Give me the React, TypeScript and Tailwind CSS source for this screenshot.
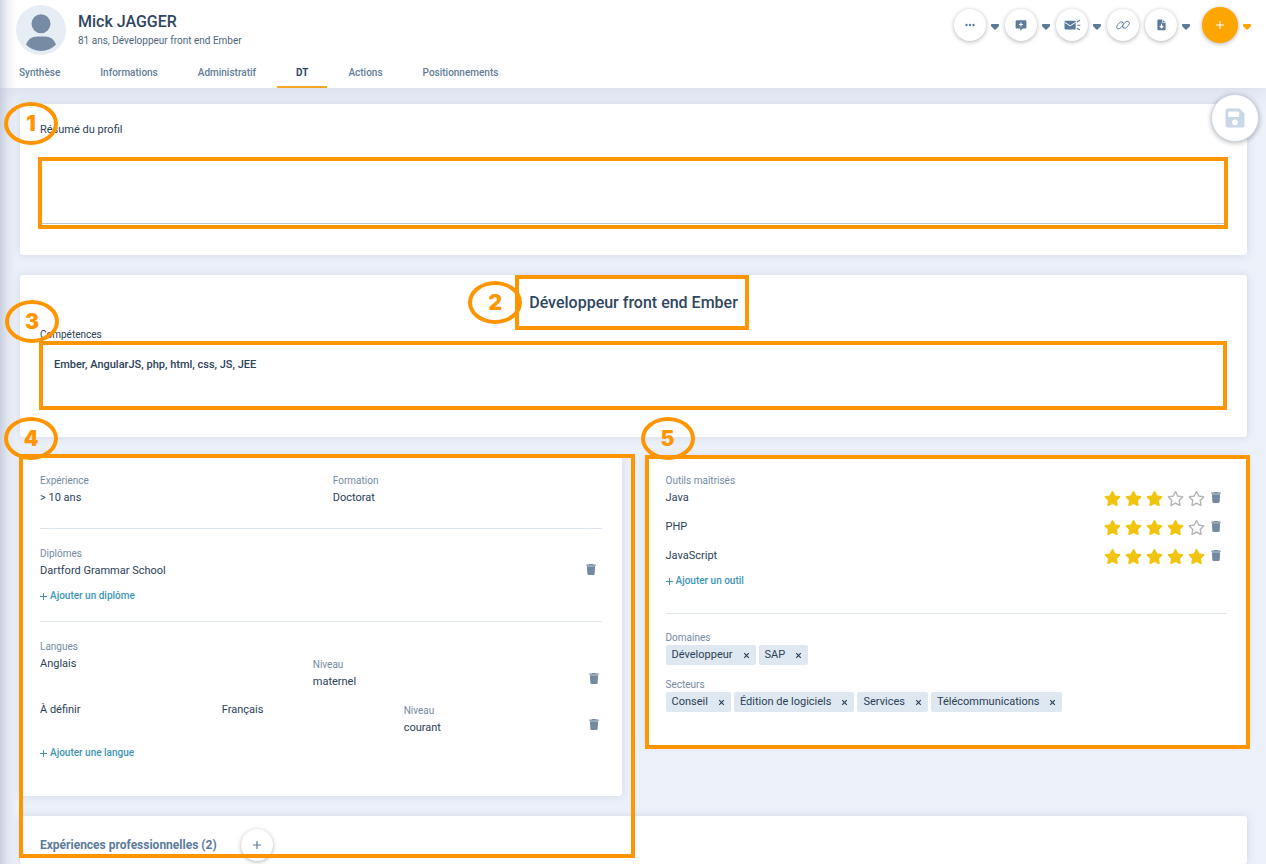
import { useState, type ReactNode } from "react";
import { FaStar, FaRegStar } from "react-icons/fa";

const tabs = ["Synthèse", "Informations", "Administratif", "DT", "Actions", "Positionnements"];
const tools = [
  { name: "Java", level: 3 },
  { name: "PHP", level: 4 },
  { name: "JavaScript", level: 5 },
];

/* ---------- icons ---------- */

function Caret() {
  return (
    <svg viewBox="0 0 8 6" className="h-1.5 w-2" fill="currentColor" aria-hidden="true">
      <path d="M.7 0h6.6Q8 0 8 .8v.7Q8 2 7.6 2.4L4.6 5.5q-.6.5-1.2 0L.4 2.4Q0 2 0 1.500V.8Q0 0 .7 0z" />
    </svg>
  );
}

function TrashIcon() {
  return (
    <svg viewBox="0 0 10 11" className="h-[11px] w-2.5" fill="currentColor" aria-hidden="true">
      <path d="M3.300 0h3.400l.5.6h2.200q.4 0 .4.4v.7H.2V1q0-.4.4-.4h2.200z" />
      <path d="M.9 2.300h8.200l-.5 7.600q-.1 1.100-1.100 1.100h-5q-1 0-1.100-1.100z" />
    </svg>
  );
}

function DotsIcon() {
  return (
    <svg viewBox="0 0 10 4" className="h-1 w-2.5" fill="currentColor" aria-hidden="true">
      <circle cx="1.500" cy="2" r="1.200" />
      <circle cx="5" cy="2" r="1.200" />
      <circle cx="8.500" cy="2" r="1.200" />
    </svg>
  );
}

function CommentIcon() {
  return (
    <svg viewBox="0 0 12 11" className="h-[11px] w-3" aria-hidden="true">
      <path d="M1.800.3h8.400q1.200 0 1.200 1.200v5.800q0 1.200-1.200 1.200H7.800L5.300 10.700V8.500H1.800Q.6 8.500.6 7.300V1.500Q.6.3 1.800.3z" fill="currentColor" />
      <path d="M6 2.500v4M4 4.500h4" stroke="#fff" strokeWidth="1.100" fill="none" />
    </svg>
  );
}

function MailIcon() {
  return (
    <svg viewBox="0 0 17 12" className="h-3 w-[17px]" fill="none" aria-hidden="true">
      <rect x=".5" y="1.800" width="11.200" height="8.800" rx="1" fill="currentColor" />
      <path d="M.6 3.300l5.500 3.500 5.500-3.500" stroke="#fff" strokeWidth="1" />
      <path d="M12.900 3l3-1.700M13.300 6.200h3M12.900 9.200l3 1.700" stroke="currentColor" strokeWidth="1.100" />
    </svg>
  );
}

function LinkIcon() {
  return (
    <svg viewBox="0 0 14 10" className="h-2.5 w-3.5" fill="none" stroke="currentColor" strokeWidth=".9" strokeLinecap="round" aria-hidden="true">
      <path d="M5.800 3.300l1-1.100Q4.900.9 3.200 2.900L1.500 4.900Q-.2 7.200 1.200 8.400q1.800 1.300 3.600-.6l2-2.200Q8.200 3.800 7.200 2.600" />
      <path d="M8 6.900l-.9 1q1.900 1.200 3.700-.7l1.700-2Q14.200 3 12.700 1.700q-1.700-1.300-3.500.6l-2 2.200Q5.800 6.200 6.700 7.400" />
    </svg>
  );
}

function FileIcon() {
  return (
    <svg viewBox="0 0 9 12" className="h-3 w-[9px]" aria-hidden="true">
      <path d="M1.500.5h4L8.600 3.600v6.500q0 1.200-1.200 1.200H1.500Q.4 11.300.4 10.100V1.700Q.4.500 1.500.5z" fill="currentColor" />
      <path d="M5.500.3v3.300h3.300" stroke="#fff" strokeWidth=".7" fill="none" />
      <path d="M4.500 4.800v3.800M2.700 7l1.800 1.900L6.300 7" stroke="#fff" strokeWidth="1.100" fill="none" />
    </svg>
  );
}

function PlusIcon() {
  return (
    <svg viewBox="0 0 10 10" className="size-2.5" fill="none" stroke="currentColor" aria-hidden="true">
      <path d="M5 1v8M1 5h8" strokeWidth="1.200" />
    </svg>
  );
}

function SaveIcon() {
  return (
    <svg viewBox="0 0 20 20" className="size-5" aria-hidden="true">
      <path d="M3 .5h11.500L19.500 5.500V17q0 2.500-2.500 2.500H3Q.5 19.500.5 17V3Q.5.5 3 .5z" fill="#c9d8e6" />
      <rect x="3.200" y="3.500" width="11" height="5.600" rx="1.200" fill="#fff" />
      <circle cx="10" cy="14.300" r="2.900" fill="#fff" />
    </svg>
  );
}

/* ---------- shared parts ---------- */

function Card({ className, children }: { className: string; children: ReactNode }) {
  return (
    <section className={`relative rounded-[3px] bg-white px-5 shadow-[0_0_8px_rgba(60,80,120,0.13)] ${className}`}>{children}</section>
  );
}

function Frame({ className }: { className: string }) {
  return <div aria-hidden="true" className={`pointer-events-none absolute z-10 border-4 border-[#ff9500] ${className}`} />;
}

function Marker({ n, className }: { n: number; className: string }) {
  return (
    <div className={`pointer-events-none absolute z-20 flex h-[43px] w-[54px] items-center justify-center rounded-[50%] border-4 border-[#ff9500] font-[Inter,sans-serif] text-[21px] leading-none font-black text-[#ff9500] ${className}`}>
      {n}
    </div>
  );
}

function Label({ children }: { children: ReactNode }) {
  return <div className="text-[10px] leading-[14px] text-[#748aa1]">{children}</div>;
}

function Value({ children }: { children: ReactNode }) {
  return <div className="text-[11px] leading-5 text-[#2b4158]">{children}</div>;
}

function Field({ label, value }: { label: string; value: string }) {
  return (
    <div>
      <Label>{label}</Label>
      <Value>{value}</Value>
    </div>
  );
}

function AddLink({ children }: { children: ReactNode }) {
  return (
    <button type="button" className="mt-1.5 flex items-center gap-[3px] text-[10px] leading-[18px] font-medium text-[#3d95b3]">
      <svg viewBox="0 0 7 7" className="size-[7px]" stroke="currentColor" fill="none" aria-hidden="true">
        <path d="M3.500 0v7M0 3.500h7" strokeWidth="1" />
      </svg>
      {children}
    </button>
  );
}

function TrashButton({ label }: { label: string }) {
  return (
    <button type="button" aria-label={label} className="block text-[#748aa1]">
      <TrashIcon />
    </button>
  );
}

function RoundButton({ label, children }: { label: string; children: ReactNode }) {
  return (
    <button type="button" aria-label={label} className="flex size-8 items-center justify-center rounded-full bg-white text-[#5b7b99] shadow-[0_1px_4px_rgba(0,0,0,0.3)]">
      {children}
    </button>
  );
}

function MenuButton({ label, icon }: { label: string; icon: ReactNode }) {
  return (
    <div className="flex items-center gap-[5px]">
      <RoundButton label={label}>{icon}</RoundButton>
      <button type="button" aria-label={`${label} : options`} className="pt-[3px] text-[#5b7b99]">
        <Caret />
      </button>
    </div>
  );
}

function Chips({ items }: { items: string[] }) {
  return (
    <div className="flex flex-wrap gap-[3px]">
      {items.map((item) => (
        <span key={item} className="flex h-5 items-center gap-2.5 rounded-[2px] bg-[#dfe8f1] px-1.5 text-[11px] text-[#2b4158]">
          {item}
          <button type="button" aria-label={`Retirer ${item}`}>
            <svg viewBox="0 0 7 7" className="size-[7px]" stroke="currentColor" fill="none" aria-hidden="true">
              <path d="M1.200 1.200l4.600 4.600M5.800 1.200L1.200 5.800" strokeWidth="1.200" />
            </svg>
          </button>
        </span>
      ))}
    </div>
  );
}

/* ---------- page ---------- */

export default function App() {
  const [skills, setSkills] = useState("Ember, AngularJS, php, html, css, JS, JEE");
  const [summary, setSummary] = useState("");

  return (
    <div className="relative min-h-screen bg-[#ebf0f9] font-[Roboto,sans-serif]">
      <div aria-hidden="true" className="pointer-events-none absolute inset-y-0 left-0 z-[5] w-4 bg-linear-to-r from-[#b4bacd]/60 via-[#c4cadb]/25 to-transparent" />

      <header className="bg-white shadow-[0_0_24px_rgba(60,80,120,0.16)]">
        <div className="flex items-start justify-between pt-[5px] pr-[15px] pl-4">
          <div className="flex items-center gap-3">
            <svg viewBox="0 0 50 50" className="size-[50px]" role="img" aria-label="Mick Jagger">
              <circle cx="25" cy="25" r="25" fill="#e7edf4" />
              <circle cx="25" cy="18.800" r="9.500" fill="#778ca4" />
              <path d="M10 39.500Q13 31.500 21 31.500h8q8 0 11 8Q34 46 25 46T10 39.500z" fill="#778ca4" />
            </svg>
            <div className="pt-0.5">
              <h1 className="text-base leading-5 font-medium text-[#2f475f]">Mick JAGGER</h1>
              <p className="text-[10px] leading-[18px] text-[#50667c]">81 ans, Développeur front end Ember</p>
            </div>
          </div>
          <div className="flex items-center gap-1.5 pt-0.5">
            <MenuButton label="Plus" icon={<DotsIcon />} />
            <MenuButton label="Commenter" icon={<CommentIcon />} />
            <MenuButton label="Envoyer un email" icon={<MailIcon />} />
            <RoundButton label="Copier le lien">
              <LinkIcon />
            </RoundButton>
            <MenuButton label="Télécharger" icon={<FileIcon />} />
            <div className="ml-1.5 flex items-center gap-[5px]">
              <button type="button" aria-label="Ajouter" className="flex size-9 items-center justify-center rounded-full bg-[#ffa500] text-white shadow-[0_1px_4px_rgba(0,0,0,0.3)]">
                <PlusIcon />
              </button>
              <button type="button" aria-label="Ajouter : options" className="pt-[3px] text-[#ffa500]">
                <Caret />
              </button>
            </div>
          </div>
        </div>
        <nav className="flex gap-0.5">
          {tabs.map((tab) => (
            <a
              key={tab}
              href="#"
              className={
                tab === "DT"
                  ? "border-b-2 border-[#f5a623] px-[19px] pt-[9px] pb-1 text-[10px] leading-[18px] font-bold text-[#2f475f]"
                  : "border-b-2 border-transparent px-[19px] pt-[9px] pb-1 text-[10px] leading-[18px] font-medium text-[#5f7c98]"
              }
            >
              {tab}
            </a>
          ))}
        </nav>
      </header>

      <main className="relative pt-4 pr-[19px] pl-5">
        <button type="button" aria-label="Enregistrer" className="absolute top-1.5 right-[7px] z-20 flex size-12 items-center justify-center rounded-full border border-[#c9d8e6] bg-white shadow-[0_1px_5px_rgba(0,0,0,0.3)]">
          <SaveIcon />
        </button>

        <Card className="pt-4 pb-[31px]">
          <Marker n={1} className="-top-0.5 -left-4" />
          <label htmlFor="summary" className="block text-[11px] leading-5 text-[#2b4158]">
            Résumé du profil
          </label>
          <div className="relative mt-[18px]">
            <textarea
              id="summary"
              value={summary}
              onChange={(e) => setSummary(e.target.value)}
              className="block h-[66px] w-full resize-none border-b border-[#b9c5d3] px-3.5 py-3 text-[11px] leading-[18px] outline-none"
            />
            <Frame className="-top-px -right-px -bottom-[5px] -left-0.5" />
          </div>
        </Card>

        <Card className="mt-5 pt-[17px] pb-7">
          <Marker n={3} className="top-[25px] -left-[15px]" />
          <div className="flex justify-center">
            <div className="relative">
              <Marker n={2} className="-top-[11px] -left-[61px]" />
              <h2 className="text-base leading-[22px] font-medium text-[#2f475f]">Développeur front end Ember</h2>
              <Frame className="-top-[17px] -right-[11px] -bottom-4 -left-3.5" />
            </div>
          </div>
          <label htmlFor="skills" className="mt-3.5 block text-[10px] leading-[14px] text-[#2b4158]">
            Compétences
          </label>
          <div className="relative">
            <textarea
              id="skills"
              value={skills}
              onChange={(e) => setSkills(e.target.value)}
              className="block h-[67px] w-full resize-none px-3.5 py-3.5 text-[11px] leading-[18px] font-medium text-[#2b4158] outline-none"
            />
            <Frame className="-top-px right-0 -bottom-px -left-px" />
          </div>
        </Card>

        <div className="relative mt-5">
          <Marker n={4} className="-top-10 -left-4" />
          <Frame className="-top-[3px] bottom-1.5 -left-px w-[calc(50%+2px)]" />

          <div className="grid grid-cols-2 items-start gap-6">
            <Card className="pt-[17px] pb-[34px]">
              <div className="grid grid-cols-2 gap-6">
                <Field label="Expérience" value="> 10 ans" />
                <Field label="Formation" value="Doctorat" />
              </div>
              <hr className="mt-5 border-[#dde6ee]" />

              <div className="mt-[18px] flex items-end justify-between pr-1.5">
                <Field label="Diplômes" value="Dartford Grammar School" />
                <div className="pb-1.5">
                  <TrashButton label="Supprimer le diplôme" />
                </div>
              </div>
              <AddLink>Ajouter un diplôme</AddLink>
              <hr className="mt-4 border-[#dde6ee]" />

              <div className="mt-[18px]">
                <Label>Langues</Label>
                <div className="flex items-end">
                  <div className="grid flex-1 grid-cols-2">
                    <Value>Anglais</Value>
                    <div className="pt-1">
                      <Field label="Niveau" value="maternel" />
                    </div>
                  </div>
                  <div className="w-4 pb-2 pl-[3px]">
                    <TrashButton label="Supprimer Anglais" />
                  </div>
                </div>
                <div className="mt-2 flex items-end">
                  <div className="grid flex-1 grid-cols-3">
                    <Value>À définir</Value>
                    <Value>Français</Value>
                    <div className="pt-1">
                      <Field label="Niveau" value="courant" />
                    </div>
                  </div>
                  <div className="w-4 pb-2 pl-[3px]">
                    <TrashButton label="Supprimer Français" />
                  </div>
                </div>
              </div>
              <AddLink>Ajouter une langue</AddLink>
            </Card>

            <Card className="pt-[17px] pb-[33px]">
              <Marker n={5} className="-top-10 -left-[5px]" />
              <Frame className="-top-0.5 -right-[3px] -bottom-1 -left-px" />
              <Label>Outils maîtrisés</Label>
              <ul className="flex flex-col gap-[9px]">
                {tools.map((tool) => (
                  <li key={tool.name} className="flex items-start justify-between">
                    <Value>{tool.name}</Value>
                    <div className="flex h-[18px] items-center pr-1.5">
                      <div className="flex gap-[5px] pt-0.5">
                        {[1, 2, 3, 4, 5].map((i) => (
                          <button key={i} type="button" aria-label={`${tool.name} : ${i} sur 5`} className="w-4">
                            {i <= tool.level ? <FaStar className="size-[17px] text-[#f1c40f]" /> : <FaRegStar className="size-[17px] text-[#b5b5b5]" />}
                          </button>
                        ))}
                      </div>
                      <div className="flex pl-[7px]">
                        <TrashButton label={`Supprimer ${tool.name}`} />
                      </div>
                    </div>
                  </li>
                ))}
              </ul>
              <AddLink>Ajouter un outil</AddLink>
              <hr className="mt-[23px] border-[#dde6ee]" />

              <div className="mt-[17px]">
                <Label>Domaines</Label>
                <Chips items={["Développeur", "SAP"]} />
              </div>
              <div className="mt-[13px]">
                <Label>Secteurs</Label>
                <Chips items={["Conseil", "Édition de logiciels", "Services", "Télécommunications"]} />
              </div>
            </Card>
          </div>

          <Card className="mt-5 flex items-center gap-6 pt-[13px] pb-[3px]">
            <h3 className="text-[12px] leading-[18px] font-bold text-[#5b7b99]">Expériences professionnelles (2)</h3>
            <RoundButton label="Ajouter une expérience">
              <PlusIcon />
            </RoundButton>
          </Card>
        </div>
      </main>
    </div>
  );
}
